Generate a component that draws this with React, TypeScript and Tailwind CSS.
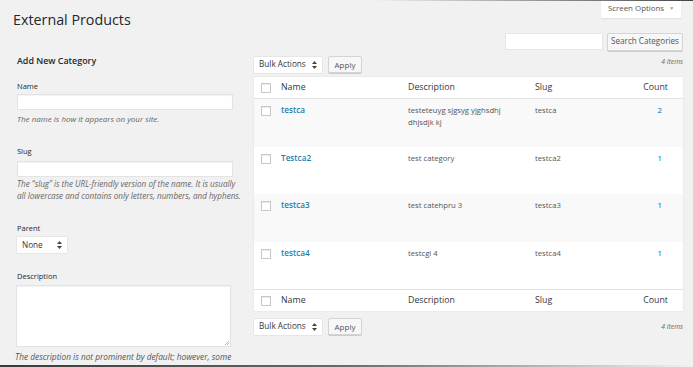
import React from "react";

const Updown = () => (
  <svg width="5" height="8" viewBox="0 0 5 8" className="text-[#444]">
    <path d="M2.5 0 L5 3 L0 3 Z" fill="currentColor" />
    <path d="M2.5 8 L5 5 L0 5 Z" fill="currentColor" />
  </svg>
);

const Box = () => (
  <div className="w-[10px] h-[10px] bg-white border border-[#c8c8c8] shadow-[inset_0_1px_1px_rgba(0,0,0,0.08)]" />
);

const BulkBar = () => (
  <div className="flex items-center gap-[6px]">
    <div className="w-[68px] h-[16px] bg-white shadow-[0_0_1px_rgba(0,0,0,0.25)] flex items-center justify-between px-[5px] text-[8.2px] text-[#32373c]">
      <span>Bulk Actions</span>
      <Updown />
    </div>
    <div className="w-[34px] h-[17px] bg-[#f7f7f7] border border-[#d4d4d4] shadow-[0_1px_0_#ccc] rounded-[2px] flex items-center justify-center text-[8px] text-[#555]">
      Apply
    </div>
  </div>
);

const HeadRow = ({ top }: { top?: boolean }) => (
  <div
    className={`flex items-center h-[22px] bg-white text-[8.8px] text-[#32373c] ${
      top ? "border-b" : "border-t"
    } border-[#e1e1e1]`}
  >
    <div className="w-[27px] pl-[7px]">
      <Box />
    </div>
    <div className="w-[127px]">Name</div>
    <div className="w-[127px]">Description</div>
    <div className="w-[108px]">Slug</div>
    <div className="flex-1 text-right pr-[15px]">Count</div>
  </div>
);

const rows = [
  { name: "testca", desc: ["testeteuyg sjgsyg yjghsdhj", "dhjsdjk kj"], slug: "testca", count: "2" },
  { name: "Testca2", desc: ["test category"], slug: "testca2", count: "1" },
  { name: "testca3", desc: ["test catehpru 3"], slug: "testca3", count: "1" },
  { name: "testca4", desc: ["testcgi 4"], slug: "testca4", count: "1" },
];

export default function App() {
  return (
    <div className="relative w-[693px] h-[367px] overflow-hidden bg-[#f1f1f1] text-[#444] font-['Open_Sans',sans-serif]">
      <div className="absolute top-0 right-0 w-[320px] h-[1px] bg-gradient-to-r from-transparent to-[#444]" />
      <div className="absolute bottom-0 left-0 w-[693px] h-[2px] bg-gradient-to-r from-[#3a3a3a] via-[#6a6a6a] to-transparent" />

      <div className="flex justify-between items-start h-[33px]">
        <h1 className="pl-[13px] pt-[11px] text-[14.3px] leading-[18px] text-[#23282d]">External Products</h1>
        <div className="mr-[12px] w-[80px] h-[18px] bg-white shadow-[0_1px_1px_rgba(0,0,0,0.06)] flex items-center justify-center gap-[5px] text-[7.9px] text-[#555]">
          <span>Screen Options</span>
          <span className="text-[5px] text-[#999]">▼</span>
        </div>
      </div>

      <div className="flex">
        <div className="w-[216px] ml-[17px] shrink-0">
          <div className="mt-[22px] text-[8.9px] leading-[12px] font-semibold text-[#23282d]">Add New Category</div>
          <div className="mt-[14px] text-[7.5px] leading-[10px] text-[#23282d]">Name</div>
          <div className="mt-[3px] h-[16px] bg-white border border-[#e3e3e3] shadow-[inset_0_1px_1px_rgba(0,0,0,0.05)]" />
          <div className="mt-[3px] text-[8px] leading-[12px] italic text-[#666]">The name is how it appears on your site.</div>
          <div className="mt-[21px] text-[7.5px] leading-[10px] text-[#23282d]">Slug</div>
          <div className="mt-[5px] h-[16px] bg-white border border-[#e3e3e3] shadow-[inset_0_1px_1px_rgba(0,0,0,0.05)]" />
          <div className="mt-[1px] text-[8.1px] leading-[11.5px] italic text-[#666] whitespace-nowrap">
            The “slug” is the URL-friendly version of the name. It is usually
            <br />
            all lowercase and contains only letters, numbers, and hyphens.
          </div>
          <div className="mt-[22px] text-[7.5px] leading-[10px] text-[#23282d]">Parent</div>
          <div className="mt-[4px] w-[50px] h-[16px] bg-white shadow-[0_0_1px_rgba(0,0,0,0.25)] flex items-center justify-between px-[5px] text-[8.2px] text-[#32373c]">
            <span>None</span>
            <Updown />
          </div>
          <div className="mt-[18px] text-[7.5px] leading-[10px] text-[#23282d]">Description</div>
          <div className="relative mt-[4px] -ml-[1px] w-[215px] h-[62px] bg-white border border-[#e3e3e3] shadow-[inset_0_1px_1px_rgba(0,0,0,0.05)]">
            <svg className="absolute right-[1px] bottom-[1px]" width="5" height="5" viewBox="0 0 5 5">
              <path d="M1 5 L5 1 M3 5 L5 3" stroke="#999" strokeWidth="0.7" />
            </svg>
          </div>
          <div className="mt-[4px] -ml-[2px] text-[8.3px] leading-[11px] italic text-[#555] whitespace-nowrap">
            The description is not prominent by default; however, some
          </div>
        </div>

        <div className="ml-[21px] w-[429px] -mt-[33px]">
          <div className="flex justify-end items-center gap-[4px] mt-[33px] h-[17px]">
            <div className="w-[98px] h-[17px] bg-white border border-[#e6e6e6]" />
            <div className="w-[76px] h-[18px] bg-[#f7f7f7] border border-[#d4d4d4] shadow-[0_1px_0_#ccc] rounded-[2px] flex items-center justify-center text-[8.1px] text-[#555]">
              Search Categories
            </div>
          </div>
          <div className="mt-[5px] flex justify-between items-start">
            <div className="mt-[1px]">
              <BulkBar />
            </div>
            <div className="text-[6.8px] italic text-[#666] leading-[10px] mt-[2px]">4 items</div>
          </div>
          <div className="mt-[4px] bg-white shadow-[0_0_1px_rgba(0,0,0,0.15)]">
            <HeadRow top />
            {rows.map((r, i) => (
              <div
                key={r.name}
                className={`flex items-start h-[47.5px] pt-[5px] ${i % 2 === 0 ? "bg-[#f9f9f9]" : "bg-white"}`}
              >
                <div className="w-[27px] pl-[7px] pt-[2px]">
                  <Box />
                </div>
                <div className="w-[127px] text-[8.2px] leading-[12px] font-semibold text-[#1e7fae]">{r.name}</div>
                <div className="w-[127px] text-[7.7px] leading-[12px] text-[#555]">
                  {r.desc.map((d) => (
                    <div key={d}>{d}</div>
                  ))}
                </div>
                <div className="w-[108px] text-[7.7px] leading-[12px] text-[#555]">{r.slug}</div>
                <div className="flex-1 text-right pr-[21px] text-[8px] leading-[12px] text-[#0073aa]">{r.count}</div>
              </div>
            ))}
            <HeadRow />
          </div>
          <div className="mt-[7px] flex justify-between items-start">
            <BulkBar />
            <div className="text-[6.8px] italic text-[#666] leading-[10px] mt-[4px]">4 items</div>
          </div>
        </div>
      </div>
    </div>
  );
}
